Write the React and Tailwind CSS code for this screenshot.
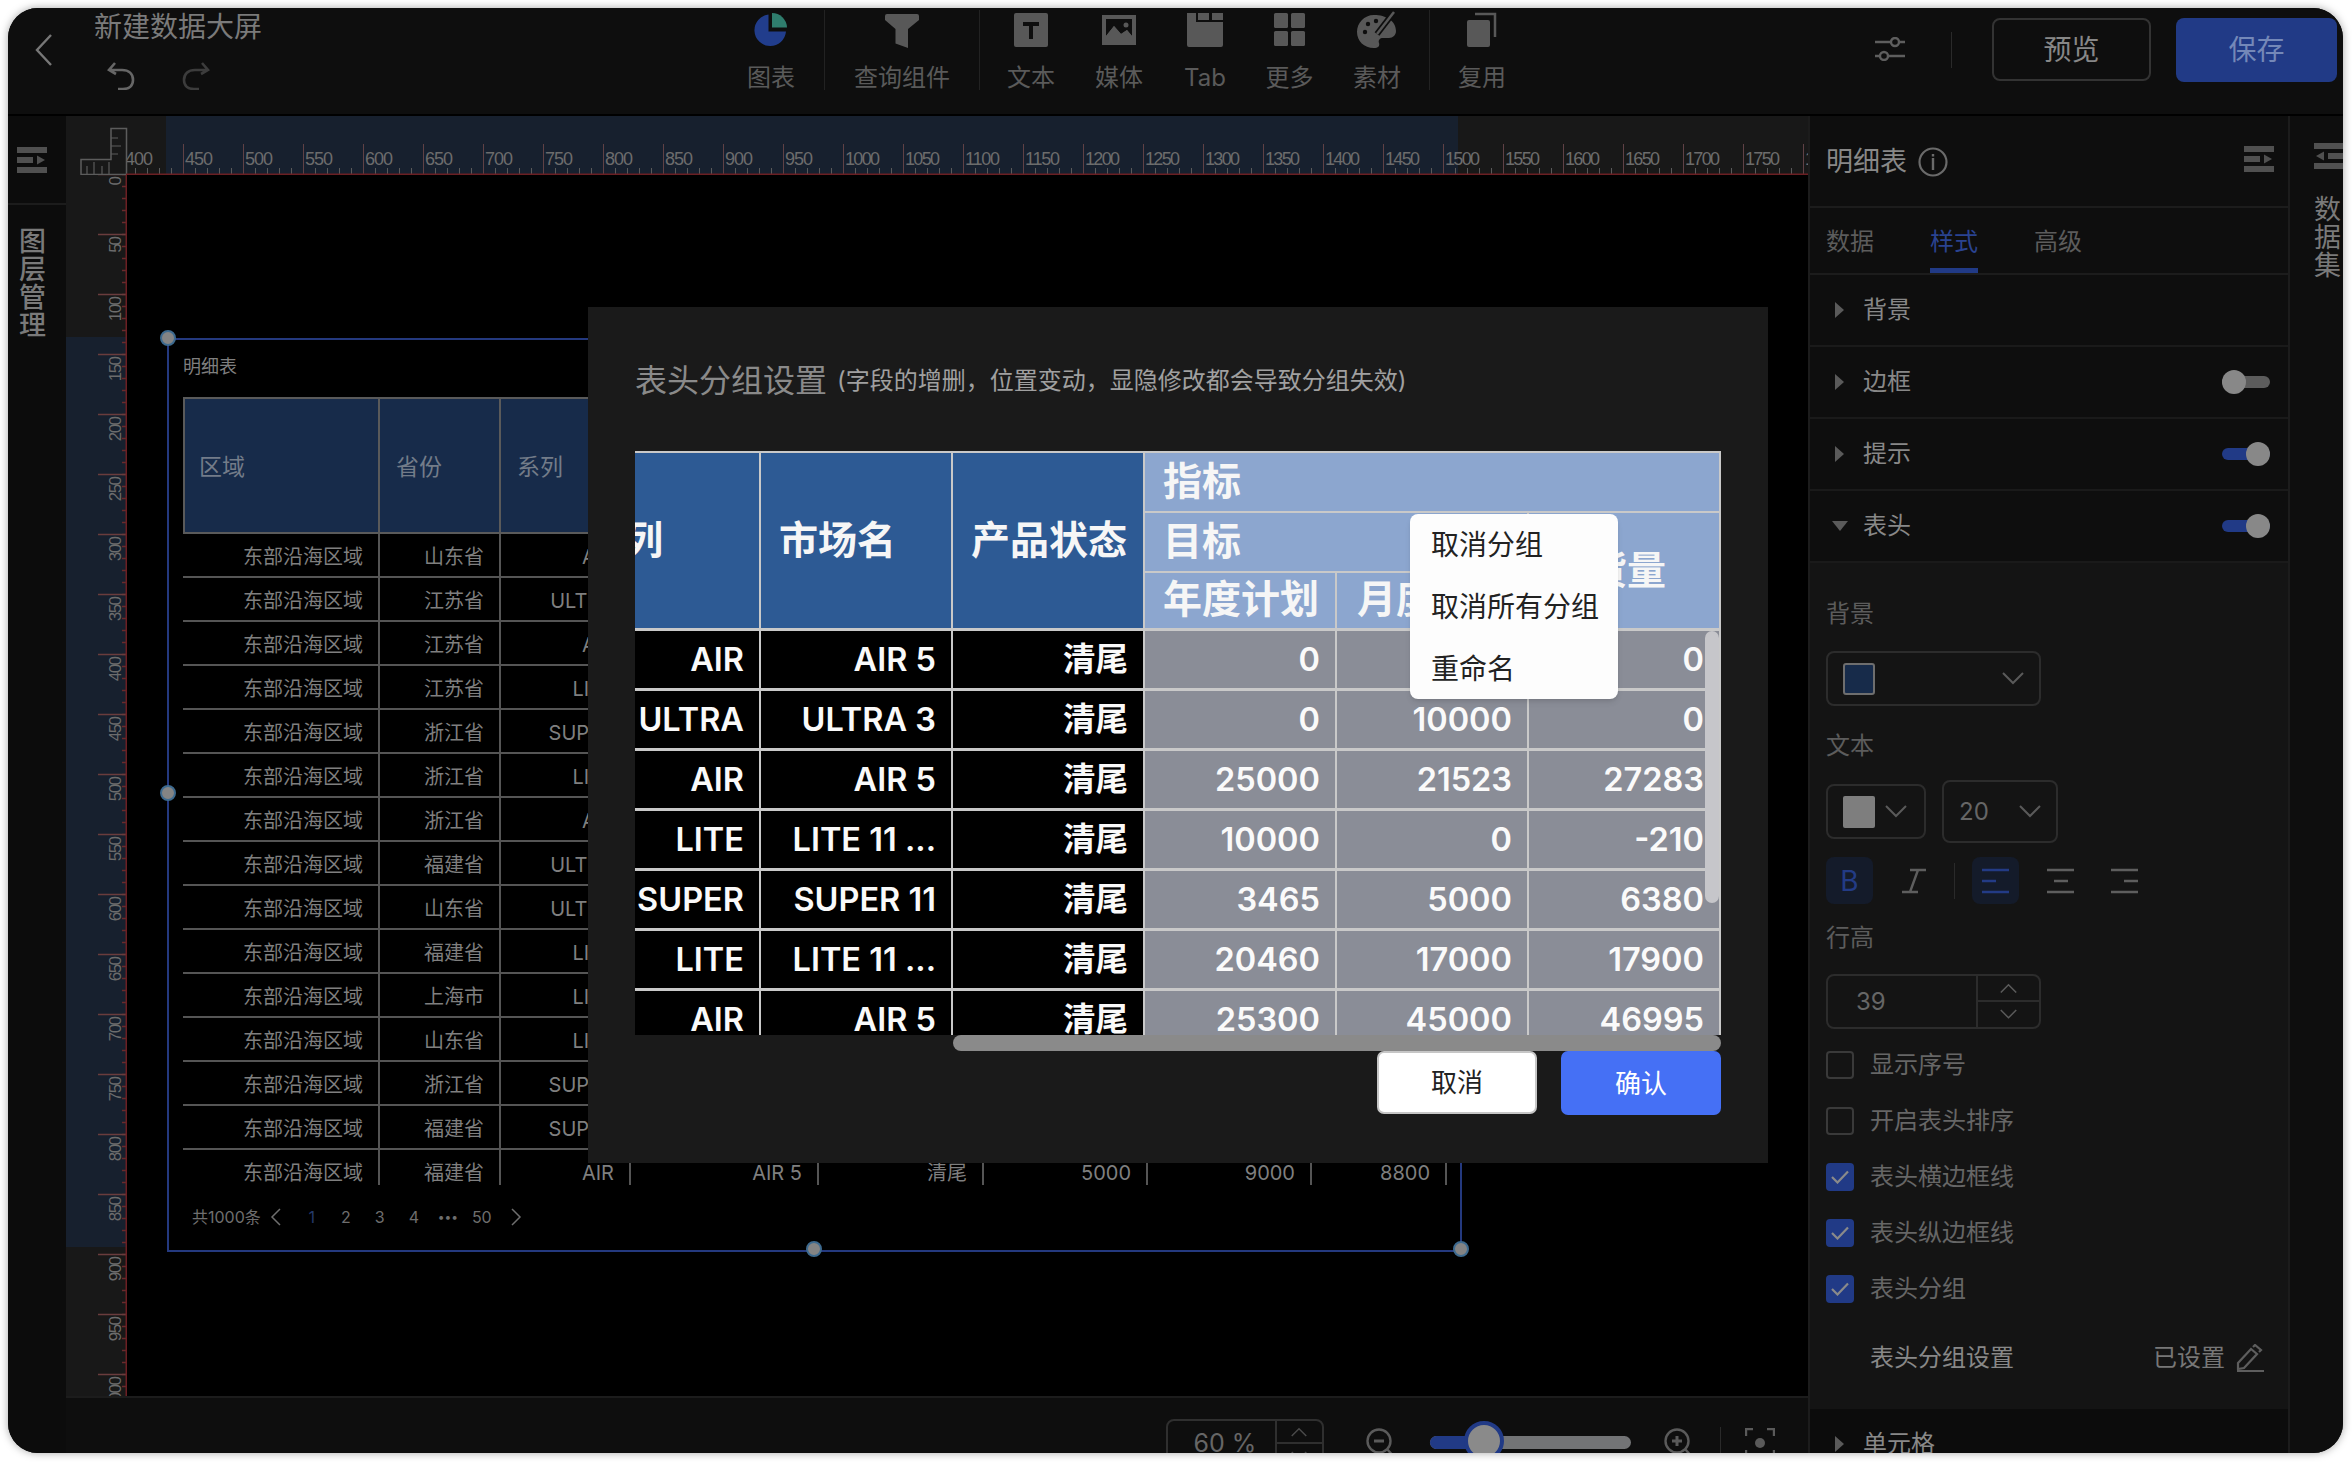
import React from "react";

const Range = (n) => Array.from({ length: n }, (_, i) => i);

function TopRuler() {
  const majors = Range(29).map((i) => 57 + 60 * i);
  const minors = Range(140).map((i) => 57 + 12 * i);
  return (
    <svg width="1742" height="59" className="block shrink-0">
      <rect x="0" y="0" width="1742" height="59" fill="#181818" />
      <rect x="100" y="0" width="1292" height="59" fill="#17202e" />
      {minors.map((x) => (
        <line key={x} x1={x + 0.5} x2={x + 0.5} y1="52" y2="58" stroke="#5a5a5a" strokeWidth="1" />
      ))}
      {majors.map((x, i) => (
        <g key={x}>
          <line x1={x + 0.5} x2={x + 0.5} y1="28" y2="58" stroke="#5f4145" strokeWidth="1" />
          <text x={x + 2} y="49" fontSize="18" fill="#6c6c6c" fontFamily="Liberation Sans" textLength={400 + 50 * i >= 1000 ? 35 : 28}>
            {400 + 50 * i}
          </text>
        </g>
      ))}
      <rect x="0" y="0" width="60" height="59" fill="#181818" />
      <path d="M45 12.5H60.5V58.5H15V43.5H45Z" fill="none" stroke="#5c5c5c" strokeWidth="1.5" />
      <path d="M21 58V50M28 58V46M36 58V50M43 58V46M45 22H52M45 30H55M45 38H52" stroke="#5c5c5c" strokeWidth="1.2" />
      <rect x="60" y="57.5" width="1682" height="1.5" fill="#6b1f23" />
    </svg>
  );
}

function SideRuler() {
  const majors = Range(21).map((i) => 60 * i - 1);
  const minors = Range(102).map((i) => 12 * i - 1);
  return (
    <svg width="61" height="1221" className="block shrink-0">
      <rect x="0" y="0" width="61" height="1221" fill="#181818" />
      <rect x="0" y="162" width="61" height="910" fill="#17202e" />
      {minors.map((y) => (
        <line key={y} x1="56" x2="61" y1={y + 0.5} y2={y + 0.5} stroke="#6a2a2c" strokeWidth="1.5" />
      ))}
      {majors.map((y, i) => {
        const v = String(50 * i);
        return (
          <g key={y}>
            <line x1="32" x2="61" y1={y + 0.5} y2={y + 0.5} stroke="#6a3c3d" strokeWidth="1.5" />
            <text
              x="55"
              y={y + 2}
              fontSize="17"
              fill="#6c6c6c"
              fontFamily="Liberation Sans"
              textAnchor="end"
              textLength={v.length * 8.4}
              transform={`rotate(-90 55 ${y + 2})`}
            >
              {v}
            </text>
          </g>
        );
      })}
      <rect x="59.5" y="0" width="1.5" height="1221" fill="#6b1f23" />
    </svg>
  );
}

const BarsIcon = ({ flip = false, className = "" }) => (
  <svg width="30" height="26" viewBox="0 0 30 26" className={className} style={flip ? { transform: "scaleX(-1)" } : undefined}>
    <path d="M0 0H30V6H0ZM0 20H30V26H0ZM0 10H16V16H0Z" fill="#505050" />
    <path d="M20 8.5L28 13L20 17.5Z" fill="#505050" />
  </svg>
);

const Chevron = ({ w = 22, up = false, color = "#5a5a5a", sw = 2 }) => (
  <svg width={w} height={w / 2 + 2} viewBox="0 0 22 13">
    <path d={up ? "M1 12L11 2L21 12" : "M1 1L11 11L21 1"} fill="none" stroke={color} strokeWidth={sw} />
  </svg>
);

const ToolIcons = {
  chart: (
    <svg width="36" height="36" viewBox="0 0 36 36">
      <path d="M15.5 2.5A15.8 15.8 0 1 0 33 19.5L15.5 19.5Z" fill="#213d8c" />
      <path d="M19 1A15 15 0 0 1 34 15.5L19 15.5Z" fill="#2f7d6d" />
    </svg>
  ),
  funnel: (
    <svg width="36" height="36" viewBox="0 0 36 36">
      <path d="M3 2Q1 2 1 4V8L11.5 17V31.5L24 36V17L35 8V4Q35 2 33 2Z" fill="#585858" />
    </svg>
  ),
  text: (
    <svg width="36" height="36" viewBox="0 0 36 36">
      <rect x="1" y="1" width="34" height="34" rx="2" fill="#585858" />
      <path d="M10 10H26V14H20V27H16V14H10Z" fill="#0e0e0e" />
    </svg>
  ),
  media: (
    <svg width="36" height="36" viewBox="0 0 36 36">
      <path d="M1 3H35V33H1ZM5 7V24L13 14L20 22L26 18L31 24V7Z" fill="#585858" fillRule="evenodd" />
      <circle cx="25" cy="13" r="2.5" fill="#585858" />
      <path d="M5 24L13 14L20 22L26 18L31 24V29H5Z" fill="#585858" />
    </svg>
  ),
  tab: (
    <svg width="38" height="36" viewBox="0 0 38 36">
      <path d="M1 1H10V10H37V33Q37 35 35 35H3Q1 35 1 33Z" fill="#585858" />
      <rect x="12" y="1" width="11" height="7" fill="#585858" />
      <rect x="26" y="1" width="11" height="7" fill="#585858" />
    </svg>
  ),
  more: (
    <svg width="34" height="36" viewBox="0 0 34 36">
      <rect x="1" y="1" width="14" height="15" rx="1.5" fill="#585858" />
      <rect x="18" y="1" width="14" height="15" rx="1.5" fill="#585858" />
      <rect x="1" y="19" width="14" height="15" rx="1.5" fill="#585858" />
      <rect x="18" y="19" width="14" height="15" rx="1.5" fill="#585858" />
    </svg>
  ),
  material: (
    <svg width="42" height="38" viewBox="0 0 42 38">
      <path d="M18 4C8 4 1 12 1 21C1 30 8 37 18 37C22 37 24 35 23 32C22 29 24 27 27 27H33C37 27 40 24 40 20C40 10 30 4 18 4Z" fill="#585858" />
      <circle cx="12" cy="13" r="2.2" fill="#0e0e0e" />
      <circle cx="9" cy="21" r="2.2" fill="#0e0e0e" />
      <circle cx="20" cy="10" r="2.2" fill="#0e0e0e" />
      <path d="M21 23L38 1" stroke="#0e0e0e" strokeWidth="6" />
      <path d="M21 23L38 1" stroke="#585858" strokeWidth="2.5" />
    </svg>
  ),
  reuse: (
    <svg width="32" height="36" viewBox="0 0 32 36">
      <rect x="1" y="8" width="23" height="27" rx="2" fill="#585858" />
      <path d="M9 2H29V25" fill="none" stroke="#585858" strokeWidth="2.5" />
    </svg>
  ),
};

const Tool = ({ w, icon, label }) => (
  <div className={`flex flex-col items-center ${w}`}>
    <div className="flex h-[36px] items-center justify-center">{ToolIcons[icon]}</div>
    <div className="mt-[14px] text-[24px] leading-[32px] text-[#5a5a5a]">{label}</div>
  </div>
);

const ToolDivider = () => <div className="mt-[-2px] h-[80px] w-[1px] bg-[#222222]" />;

function TopBar() {
  return (
    <div className="flex h-[108px] shrink-0 border-b-2 border-black bg-[#0e0e0e]">
      <div className="flex w-[710px] shrink-0">
        <svg width="18" height="32" viewBox="0 0 18 32" className="ml-[27px] mt-[26px]">
          <path d="M16 1L2 16L16 31" fill="none" stroke="#777777" strokeWidth="2.4" />
        </svg>
        <div className="ml-[41px] flex flex-col">
          <div className="mt-[1px] text-[28px] leading-[36px] text-[#7a7a7a]">新建数据大屏</div>
          <div className="ml-[13px] mt-[17px] flex gap-[47px]">
            <svg width="28" height="28" viewBox="0 0 28 28">
              <path d="M8 1L2 8L9 12M3 8H15C22 8 26 12 26 18C26 24 22 27 16 27H11" fill="none" stroke="#666666" strokeWidth="2.6" />
            </svg>
            <svg width="28" height="28" viewBox="0 0 28 28">
              <path d="M20 1L26 8L19 12M25 8H13C6 8 2 12 2 18C2 24 6 27 12 27H17" fill="none" stroke="#3c3c3c" strokeWidth="2.6" />
            </svg>
          </div>
        </div>
      </div>
      <div className="flex pt-[4px]">
        <Tool w="w-[106px]" icon="chart" label="图表" />
        <ToolDivider />
        <Tool w="w-[154px]" icon="funnel" label="查询组件" />
        <ToolDivider />
        <Tool w="w-[102px]" icon="text" label="文本" />
        <Tool w="w-[74px]" icon="media" label="媒体" />
        <Tool w="w-[98px]" icon="tab" label="Tab" />
        <Tool w="w-[71px]" icon="more" label="更多" />
        <Tool w="w-[104px]" icon="material" label="素材" />
        <ToolDivider />
        <Tool w="w-[104px]" icon="reuse" label="复用" />
      </div>
      <svg width="30" height="24" viewBox="0 0 30 24" className="ml-[341px] mt-[29px]">
        <path d="M0 5H30M0 19H30" stroke="#5e5e5e" strokeWidth="2.4" />
        <circle cx="20" cy="5" r="4" fill="#0e0e0e" stroke="#5e5e5e" strokeWidth="2.4" />
        <circle cx="9" cy="19" r="4" fill="#0e0e0e" stroke="#5e5e5e" strokeWidth="2.4" />
      </svg>
      <div className="ml-[46px] mt-[24px] h-[36px] w-[1px] bg-[#2a2a2a]" />
      <div className="ml-[40px] mt-[10px] flex h-[63px] w-[159px] items-center justify-center rounded-[8px] border-2 border-[#333333] text-[28px] text-[#878787]">预览</div>
      <div className="ml-[25px] mt-[10px] flex h-[64px] w-[161px] items-center justify-center rounded-[8px] bg-[#213a86] text-[28px] text-[#7488b8]">保存</div>
    </div>
  );
}

const rows = [
  ["山东省", "AIR"],
  ["江苏省", "ULTRA"],
  ["江苏省", "AIR"],
  ["江苏省", "LITE"],
  ["浙江省", "SUPER"],
  ["浙江省", "LITE"],
  ["浙江省", "AIR"],
  ["福建省", "ULTRA"],
  ["山东省", "ULTRA"],
  ["福建省", "LITE"],
  ["上海市", "LITE"],
  ["山东省", "LITE"],
  ["浙江省", "SUPER"],
  ["福建省", "SUPER"],
  ["福建省", "AIR"],
];

const canvasCols = ["w-[197px]", "w-[121px]", "w-[130px]", "w-[188px]", "w-[165px]", "w-[164px]", "w-[164px]", "w-[135px]"];

function CanvasTable() {
  return (
    <div className="h-[788px] w-[1280px] overflow-hidden">
      <div className="flex h-[137px] w-[1264px] border-2 border-[#5a5a5a] bg-[#172b4a] text-[23px] text-[#737c89]">
        <div className="flex w-[195px] items-center border-r-2 border-[#5a5a5a] pl-[14px] pt-[3px]">区域</div>
        <div className="flex w-[121px] items-center border-r-2 border-[#5a5a5a] pl-[16px] pt-[3px]">省份</div>
        <div className="flex w-[130px] items-center border-r-2 border-[#5a5a5a] pl-[16px] pt-[3px]">系列</div>
        <div className="w-[188px] border-r-2 border-[#5a5a5a]" />
        <div className="w-[165px] border-r-2 border-[#5a5a5a]" />
        <div className="w-[164px] border-r-2 border-[#5a5a5a]" />
        <div className="w-[164px] border-r-2 border-[#5a5a5a]" />
      </div>
      {rows.map((r, i) => {
        const last = i === rows.length - 1;
        const cells = ["东部沿海区域", r[0], r[1], last ? "AIR 5" : "", last ? "清尾" : "", last ? "5000" : "", last ? "9000" : "", last ? "8800" : ""];
        return (
          <div key={i} className="flex h-[44px] w-[1264px]">
            {cells.map((c, j) => (
              <div
                key={j}
                className={`flex items-center justify-end whitespace-nowrap border-b-2 border-r-2 border-[#555555] pr-[15px] pt-[3px] text-[20px] text-[#7f7f7f] ${canvasCols[j]}`}
              >
                {c}
              </div>
            ))}
          </div>
        );
      })}
    </div>
  );
}

const Handle = ({ pos }) => (
  <div className={`absolute h-[16px] w-[16px] rounded-full border-2 border-[#3d6a8f] bg-[#848484] ${pos}`} />
);

const PageNo = ({ children, cls = "" }) => <span className={`flex w-[34px] shrink-0 items-center justify-center ${cls}`}>{children}</span>;

function CanvasFrame() {
  return (
    <div className="absolute left-[40px] top-[163px] h-[914px] w-[1295px] border-2 border-[#24397f] pl-[14px]">
      <div className="flex h-[57px] items-center pb-[5px] text-[18px] text-[#7f7f7f]">明细表</div>
      <CanvasTable />
      <div className="flex h-[64px] items-center text-[16px] text-[#6e6e6e]">
        <span className="ml-[9px] whitespace-nowrap">共1000条</span>
        <svg width="12" height="20" viewBox="0 0 12 20" className="ml-[9px] shrink-0"><path d="M10 2L2 10L10 18" fill="none" stroke="#6e6e6e" strokeWidth="1.5" /></svg>
        <div className="ml-[13px] flex">
          <PageNo cls="text-[#253a6a]">1</PageNo>
          <PageNo>2</PageNo>
          <PageNo>3</PageNo>
          <PageNo>4</PageNo>
          <PageNo cls="text-[12px]">•••</PageNo>
          <PageNo>50</PageNo>
          <PageNo>
            <svg width="12" height="20" viewBox="0 0 12 20"><path d="M2 2L10 10L2 18" fill="none" stroke="#6e6e6e" strokeWidth="1.5" /></svg>
          </PageNo>
        </div>
      </div>
      <Handle pos="left-[-9px] top-[-10px]" />
      <Handle pos="left-[-9px] top-[445px]" />
      <Handle pos="left-[637px] top-[901px]" />
      <Handle pos="left-[1284px] top-[901px]" />
    </div>
  );
}

function BottomBar() {
  return (
    <div className="flex h-[57px] shrink-0 items-start overflow-hidden border-t-2 border-[#1c1c1c] bg-[#0e0e0e] pl-[1100px]">
      <div className="mt-[21px] flex h-[58px] w-[158px] shrink-0 rounded-[8px] border-2 border-[#2f2f2f]">
        <div className="flex h-[46px] w-[108px] items-center justify-center pl-[7px] text-[25px] text-[#666666]">60 %</div>
        <div className="w-[48px] border-l-2 border-[#2f2f2f]">
          <div className="flex h-[23px] items-center justify-center border-b-2 border-[#2f2f2f]">
            <Chevron w={16} up color="#4a4a4a" />
          </div>
          <div className="flex h-[23px] items-center justify-center">
            <Chevron w={16} color="#4a4a4a" />
          </div>
        </div>
      </div>
      <svg width="30" height="34" viewBox="0 0 30 34" className="ml-[42px] mt-[30px] shrink-0">
        <circle cx="13" cy="13" r="11.5" fill="none" stroke="#5a5a5a" strokeWidth="2.4" />
        <path d="M8 13H18" stroke="#5a5a5a" strokeWidth="3" />
        <path d="M21 21L29 30" stroke="#5a5a5a" strokeWidth="2.4" />
      </svg>
      <div className="relative ml-[34px] mt-[38px] h-[13px] w-[201px] shrink-0 rounded-full bg-[#737476]">
        <div className="h-full w-[50px] rounded-l-full bg-[#213a86]" />
        <div className="absolute left-[34px] top-[-15px] h-[40px] w-[40px] rounded-full border-[4px] border-[#213a86] bg-[#8a8a8a]" />
      </div>
      <svg width="30" height="34" viewBox="0 0 30 34" className="ml-[33px] mt-[30px] shrink-0">
        <circle cx="13" cy="13" r="11.5" fill="none" stroke="#5a5a5a" strokeWidth="2.4" />
        <path d="M8 13H18M13 8V18" stroke="#5a5a5a" strokeWidth="3" />
        <path d="M21 21L29 30" stroke="#5a5a5a" strokeWidth="2.4" />
      </svg>
      <div className="ml-[26px] mt-[29px] h-[40px] w-[1px] shrink-0 bg-[#2a2a2a]" />
      <svg width="30" height="30" viewBox="0 0 30 30" className="ml-[24px] mt-[30px] shrink-0">
        <path d="M1 8V1H8M22 1H29V8M1 22V29H8M22 29H29V22" fill="none" stroke="#5a5a5a" strokeWidth="2.4" />
        <circle cx="15" cy="15" r="5" fill="#5a5a5a" />
      </svg>
    </div>
  );
}

const Tri = ({ down = false }) =>
  down ? (
    <svg width="16" height="10" viewBox="0 0 16 10" className="ml-[-1px] mr-[15px]"><path d="M0 0H16L8 10Z" fill="#5a5a5a" /></svg>
  ) : (
    <svg width="10" height="16" viewBox="0 0 10 16" className="ml-[2px] mr-[18px]"><path d="M0 0L9 8L0 16Z" fill="#5a5a5a" /></svg>
  );

const Toggle = ({ on }) => (
  <div className={`ml-auto mr-[18px] flex h-[12px] w-[48px] items-center rounded-full ${on ? "justify-end bg-[#213a86]" : "justify-start bg-[#5c5c5c]"}`}>
    <div className="h-[24px] w-[24px] rounded-full bg-[#888888]" />
  </div>
);

const Section = ({ label, toggle, down, cls = "h-[72px] border-b-2 border-[#1a1a1a]" }) => (
  <div className={`flex shrink-0 items-center pl-[23px] text-[24px] text-[#888888] ${cls}`}>
    <Tri down={down} />
    <span>{label}</span>
    {toggle !== undefined && <Toggle on={toggle} />}
  </div>
);

const Label = ({ children, cls }) => <div className={`h-[32px] text-[24px] leading-[32px] text-[#5c5c5c] ${cls}`}>{children}</div>;

const AlignIcon = ({ color, short }) => (
  <svg width="27" height="26" viewBox="0 0 27 26">
    <path d={`M0 2H27M0 24H27M${short} 13H${short + 14}`} stroke={color} strokeWidth="2.6" />
  </svg>
);

const Check = ({ on, label }) => (
  <div className="flex h-[28px] items-center">
    {on ? (
      <div className="flex h-[28px] w-[28px] items-center justify-center rounded-[4px] bg-[#213a86]">
        <svg width="18" height="14" viewBox="0 0 18 14"><path d="M1 7L6.5 12.5L17 1.5" fill="none" stroke="#8a8a8a" strokeWidth="2.2" /></svg>
      </div>
    ) : (
      <div className="h-[28px] w-[28px] rounded-[4px] border-2 border-[#3a3a3a]" />
    )}
    <span className="ml-[16px] text-[24px] text-[#666666]">{label}</span>
  </div>
);

function RightPanel() {
  return (
    <div className="flex w-[482px] shrink-0 flex-col overflow-hidden border-x-2 border-[#1c1c1c] bg-[#0e0e0e]">
      <div className="flex h-[92px] shrink-0 items-center border-b-2 border-[#1c1c1c] pl-[16px] pt-[2px]">
        <span className="text-[27px] text-[#888888]">明细表</span>
        <svg width="30" height="30" viewBox="0 0 30 30" className="ml-[11px]">
          <circle cx="15" cy="15" r="13.5" fill="none" stroke="#6a6a6a" strokeWidth="2.2" />
          <path d="M15 11V23M15 7V9.5" stroke="#6a6a6a" strokeWidth="2.4" />
        </svg>
        <BarsIcon className="ml-auto mr-[14px] mb-[6px]" />
      </div>
      <div className="flex h-[67px] shrink-0 items-stretch gap-[56px] border-b-2 border-[#1c1c1c] pl-[16px] text-[24px] text-[#5c5c5c]">
        <span className="pt-[16px]">数据</span>
        <span className="border-b-[5px] border-[#213a86] pt-[16px] text-[#2a4391]">样式</span>
        <span className="pt-[16px]">高级</span>
      </div>
      <Section label="背景" />
      <Section label="边框" toggle={false} />
      <Section label="提示" toggle={true} />
      <Section label="表头" toggle={true} down />
      <div className="flex h-[846px] shrink-0 flex-col bg-[#141414] pl-[16px] pt-[35px]">
        <Label>背景</Label>
        <div className="mt-[21px] flex h-[55px] w-[215px] items-center rounded-[8px] border-2 border-[#2c2c2c] pl-[15px] pr-[15px]">
          <div className="h-[32px] w-[32px] rounded-[3px] border-2 border-[#6e6e6e] bg-[#172b4a]" />
          <div className="ml-auto"><Chevron /></div>
        </div>
        <Label cls="mt-[24px]">文本</Label>
        <div className="mt-[18px] flex h-[63px] items-center gap-[16px]">
          <div className="flex h-[55px] w-[100px] items-center rounded-[8px] border-2 border-[#2c2c2c] pl-[15px]">
            <div className="h-[32px] w-[32px] rounded-[2px] bg-[#7e7e7e]" />
            <div className="ml-[10px]"><Chevron /></div>
          </div>
          <div className="flex h-[63px] w-[116px] items-center rounded-[8px] border-2 border-[#2c2c2c] pl-[15px] text-[24px] text-[#666666]">
            <span>20</span>
            <div className="ml-[30px]"><Chevron /></div>
          </div>
        </div>
        <div className="mt-[14px] flex h-[47px] items-center">
          <div className="flex h-[47px] w-[47px] items-center justify-center rounded-[8px] bg-[#141b2a] text-[28px] text-[#233b85]">B</div>
          <svg width="24" height="26" viewBox="0 0 24 26" className="ml-[29px]">
            <path d="M8 2H24M0 24H16M16 2L8 24" fill="none" stroke="#5e5e5e" strokeWidth="2.4" />
          </svg>
          <div className="ml-[28px] h-[36px] w-[1px] bg-[#2a2a2a]" />
          <div className="ml-[17px] flex h-[47px] w-[47px] items-center justify-center rounded-[8px] bg-[#141b2a]">
            <AlignIcon color="#233b85" short={0} />
          </div>
          <div className="ml-[28px]"><AlignIcon color="#5e5e5e" short={7} /></div>
          <div className="ml-[37px]"><AlignIcon color="#5e5e5e" short={13} /></div>
        </div>
        <Label cls="mt-[18px]">行高</Label>
        <div className="mt-[20px] flex h-[55px] w-[215px] rounded-[8px] border-2 border-[#2c2c2c]">
          <div className="flex w-[148px] items-center pl-[28px] text-[24px] text-[#666666]">39</div>
          <div className="flex-1 border-l-2 border-[#2c2c2c]">
            <div className="flex h-[26px] items-center justify-center border-b-2 border-[#2c2c2c]"><Chevron w={17} up /></div>
            <div className="flex h-[25px] items-center justify-center"><Chevron w={17} /></div>
          </div>
        </div>
        <div className="mt-[22px] flex flex-col gap-[28px]">
          <Check label="显示序号" />
          <Check label="开启表头排序" />
          <Check on label="表头横边框线" />
          <Check on label="表头纵边框线" />
          <Check on label="表头分组" />
        </div>
        <div className="mt-[35px] flex h-[40px] items-center pl-[44px] pr-[24px] text-[24px] text-[#888888]">
          <span>表头分组设置</span>
          <span className="ml-auto text-[#777777]">已设置</span>
          <svg width="28" height="28" viewBox="0 0 28 28" className="ml-[11px]">
            <path d="M2 19L15 5L21 10L8 24L2 25ZM17 3L19 1L25 6L23 8" fill="none" stroke="#5e5e5e" strokeWidth="2.2" />
            <path d="M1 27H28" stroke="#5e5e5e" strokeWidth="2" />
          </svg>
        </div>
      </div>
      <Section label="单元格" cls="h-[72px] pb-[2px] bg-[#0c0c0c] text-[#888888]" />
    </div>
  );
}

const Head = ({ cls, children }) => (
  <div className={`flex items-center overflow-hidden border-b-2 border-r-2 border-[#c9c9c9] pl-[18px] text-[39px] font-semibold text-[#f6f6f6] ${cls}`}>
    {children}
  </div>
);

const tableCols = "grid-cols-[126px_192px_192px_192px_192px_192px]";

const body = [
  ["AIR", "AIR 5", "清尾", "0", "0", "0"],
  ["ULTRA", "ULTRA 3", "清尾", "0", "10000", "0"],
  ["AIR", "AIR 5", "清尾", "25000", "21523", "27283"],
  ["LITE", "LITE 11 ...", "清尾", "10000", "0", "-210"],
  ["SUPER", "SUPER 11", "清尾", "3465", "5000", "6380"],
  ["LITE", "LITE 11 ...", "清尾", "20460", "17000", "17900"],
  ["AIR", "AIR 5", "清尾", "25300", "45000", "46995"],
];

function GroupTable() {
  return (
    <div className="relative">
      <div className="h-[584px] w-[1086px] overflow-hidden">
        <div className={`grid h-[180px] border-t-2 border-[#c9c9c9] ${tableCols} grid-rows-[60px_60px_58px]`}>
          <Head cls="row-span-3 border-b-[3px] bg-[#2d5a94]"><span className="ml-[-68px] whitespace-nowrap">系列</span></Head>
          <Head cls="row-span-3 border-b-[3px] bg-[#2d5a94]">市场名</Head>
          <Head cls="row-span-3 border-b-[3px] bg-[#2d5a94] pl-[16px]">产品状态</Head>
          <Head cls="col-span-3 bg-[#8ca6cf] pb-[2px]">指标</Head>
          <Head cls="col-span-2 bg-[#8ca6cf] pb-[2px]">目标</Head>
          <Head cls="row-span-2 border-b-[3px] bg-[#8ca6cf] pl-[20px]">出货量</Head>
          <Head cls="border-b-[3px] bg-[#8ca6cf] pb-[2px]">年度计划</Head>
          <Head cls="border-b-[3px] bg-[#8ca6cf] pb-[2px] pl-[20px]">月度目标</Head>
        </div>
        {body.map((r, i) => (
          <div key={i} className={`grid h-[60px] ${tableCols}`}>
            {r.map((c, j) => (
              <div
                key={j}
                className={`flex items-center justify-end overflow-hidden whitespace-nowrap border-b-[3px] border-r-2 border-[#c9c9c9] pr-[15px] pt-[2px] text-[32.5px] font-semibold text-[#fafafa] ${j < 3 ? "bg-black" : "bg-[#8a8d97]"}`}
              >
                {c}
              </div>
            ))}
          </div>
        ))}
      </div>
      <div className="absolute left-[1070px] top-[180px] h-[272px] w-[14px] rounded-full bg-[#c6c6ca]" />
      <div className="absolute left-[775px] top-[63px] h-[185px] w-[208px] rounded-[8px] bg-[#fdfdfd] shadow-md">
        {["取消分组", "取消所有分组", "重命名"].map((t) => (
          <div key={t} className="flex h-[62px] items-center pl-[21px] text-[28px] text-[#222222]">{t}</div>
        ))}
      </div>
    </div>
  );
}

function Modal() {
  return (
    <div className="absolute left-[580px] top-[299px] flex h-[856px] w-[1180px] flex-col bg-[#1a1a1a] px-[47px]">
      <div className="flex h-[144px] shrink-0 items-center pt-[4px] whitespace-nowrap">
        <span className="text-[32px] text-[#8a8a8a]">表头分组设置</span>
        <span className="ml-[10px] text-[24px] text-[#a0a0a0]">(字段的增删，位置变动，显隐修改都会导致分组失效)</span>
      </div>
      <GroupTable />
      <div className="flex shrink-0 justify-end">
        <div className="h-[16px] w-[768px] rounded-full bg-[#8a8a8a]" />
      </div>
      <div className="flex shrink-0 justify-end gap-[24px]">
        <button className="h-[63px] w-[160px] rounded-[7px] border-2 border-[#c6c6c6] bg-white text-[26px] text-[#222222]">取消</button>
        <button className="h-[64px] w-[160px] rounded-[7px] bg-[#4570f5] text-[26px] text-white">确认</button>
      </div>
    </div>
  );
}

export default function App() {
  return (
    <div className="h-[1462px] w-[2352px] overflow-hidden bg-white pl-[8px] pt-[8px] [font-family:'Inter','Noto_Sans_CJK_SC',sans-serif]">
      <div className="relative flex h-[1445px] w-[2335px] flex-col overflow-hidden rounded-[30px] bg-[#0e0e0e] shadow-[0_0_8px_rgba(0,0,0,0.35)]">
        <TopBar />
        <div className="flex min-h-0 flex-1">
          <div className="flex w-[58px] shrink-0 flex-col bg-[#0c0c0c]">
            <div className="h-[89px] border-b-2 border-[#1c1c1c] pl-[9px] pt-[31px]">
              <BarsIcon />
            </div>
            <div className="ml-[9px] mt-[22px] w-[27px] text-[27px] font-medium leading-[27px] tracking-[1px] text-[#7a7a7a] [writing-mode:vertical-rl]">图层管理</div>
          </div>
          <div className="flex w-[1742px] shrink-0 flex-col">
            <TopRuler />
            <div className="flex h-[1221px] shrink-0">
              <SideRuler />
              <div className="relative flex-1 overflow-hidden bg-black">
                <CanvasFrame />
              </div>
            </div>
            <BottomBar />
          </div>
          <RightPanel />
          <div className="flex flex-1 flex-col overflow-hidden bg-[#0e0e0e]">
            <BarsIcon flip className="ml-[24px] mt-[27px] shrink-0" />
            <div className="ml-[22px] mt-[26px] w-[27px] text-[27px] leading-[27px] tracking-[1px] text-[#7a7a7a] [writing-mode:vertical-rl]">数据集</div>
          </div>
        </div>
        <Modal />
      </div>
    </div>
  );
}
